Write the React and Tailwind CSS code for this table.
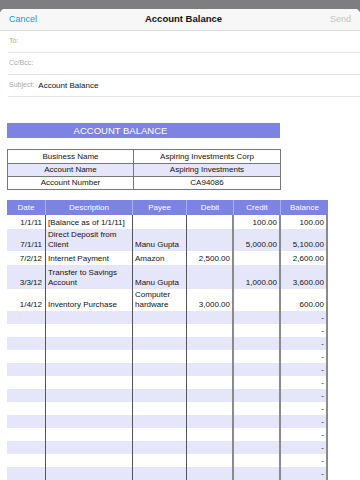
import React from "react";

const rows = [
  { bg: "bg-white", h: "h-[14px]", date: "1/1/11", desc: "[Balance as of 1/1/11]", payee: "", debit: "", credit: "100.00", balance: "100.00" },
  { bg: "bg-[#e6e6fa]", h: "h-[22px]", date: "7/1/11", desc: "Direct Deposit from Client", payee: "Manu Gupta", debit: "", credit: "5,000.00", balance: "5,100.00" },
  { bg: "bg-white", h: "h-[14px]", date: "7/2/12", desc: "Internet Payment", payee: "Amazon", debit: "2,500.00", credit: "", balance: "2,600.00" },
  { bg: "bg-[#e6e6fa]", h: "h-[24px]", date: "3/3/12", desc: "Transfer to Savings Account", payee: "Manu Gupta", debit: "", credit: "1,000.00", balance: "3,600.00" },
  { bg: "bg-white", h: "h-[22px]", date: "1/4/12", desc: "Inventory Purchase", payee: "Computer hardware", debit: "3,000.00", credit: "", balance: "600.00" },
];

const emptyRows = Array.from({ length: 13 }, (_, i) => i);

const gridCols = "grid grid-cols-[39px_87px_54px_47px_47px_47px]";

const Row = ({ row }) => (
  <div className={`${gridCols} ${row.bg} ${row.h}`}>
    <div className="flex items-end justify-end pr-[3px] pb-[1px] border-r border-[#555]">{row.date}</div>
    <div className="flex items-end pl-[2px] pb-[1px] border-r border-[#555]">{row.desc}</div>
    <div className="flex items-end pl-[2px] pb-[1px] border-r border-[#555]">{row.payee}</div>
    <div className="flex items-end justify-end pr-[2px] pb-[1px] border-r-2 border-[#8a8a8a]">{row.debit}</div>
    <div className="flex items-end justify-end pr-[2px] pb-[1px] border-r-2 border-[#8a8a8a]">{row.credit}</div>
    <div className="flex items-end justify-end pr-[2px] pb-[1px] border-r-2 border-[#8a8a8a]">{row.balance}</div>
  </div>
);

export default function App() {
  return (
    <div className="w-[360px] h-[480px] overflow-hidden bg-[#7e7e81] font-['Liberation_Sans',Arial,sans-serif]">
      <div className="h-[9px]" />
      <div className="bg-white rounded-t-[5px] h-full">
        <div className="h-[22px] bg-[#f7f7f7] border-b border-[#dcdcdc] rounded-t-[5px] flex items-center justify-between px-[9px] text-[9px]">
          <span className="text-[#2d8cf0]">Cancel</span>
          <span className="text-[#111] text-[9.5px] font-semibold">Account Balance</span>
          <span className="text-[#c4c4c4]">Send</span>
        </div>
        <div className="ml-[8px] h-[22px] border-b border-[#e3e3e3] flex items-center pl-[1px] text-[7px] text-[#a8a8a8]">To:</div>
        <div className="ml-[8px] h-[22px] border-b border-[#e3e3e3] flex items-center pl-[1px] text-[7px] text-[#a8a8a8]">Cc/Bcc:</div>
        <div className="ml-[8px] h-[22px] border-b border-[#e3e3e3] flex items-center pl-[1px] text-[7px] text-[#a8a8a8]">
          Subject:
          <span className="ml-[4px] text-[8px] text-[#111]">Account Balance</span>
        </div>

        <div className="pl-[7px] pt-[26px] text-[8px] leading-[10px] text-[#111]">
          <div className="w-[273px] h-[15px] bg-[#7c83e2] flex items-center">
            <div className="w-[227px] text-center text-white text-[9.5px]">ACCOUNT BALANCE</div>
          </div>

          <div className="mt-[11px] w-[274px] border border-[#777]">
            <div className="grid grid-cols-[126px_1fr] h-[13px] items-center">
              <div className="text-center border-r border-[#777] h-full flex items-center justify-center">Business Name</div>
              <div className="text-center">Aspiring Investments Corp</div>
            </div>
            <div className="grid grid-cols-[126px_1fr] h-[13px] items-center bg-[#e6e6fa] border-t border-[#777]">
              <div className="text-center border-r border-[#777] h-full flex items-center justify-center">Account Name</div>
              <div className="text-center">Aspiring Investments</div>
            </div>
            <div className="grid grid-cols-[126px_1fr] h-[13px] items-center border-t border-[#777]">
              <div className="text-center border-r border-[#777] h-full flex items-center justify-center">Account Number</div>
              <div className="text-center">CA94086</div>
            </div>
          </div>

          <div className="mt-[10px] w-[321px]">
            <div className={`${gridCols} h-[15px] bg-[#7c83e2] text-white`}>
              <div className="flex items-center justify-center border-r border-[#aab0ee]">Date</div>
              <div className="flex items-center justify-center border-r border-[#aab0ee]">Description</div>
              <div className="flex items-center justify-center border-r border-[#aab0ee]">Payee</div>
              <div className="flex items-center justify-center border-r border-[#aab0ee]">Debit</div>
              <div className="flex items-center justify-center border-r border-[#aab0ee]">Credit</div>
              <div className="flex items-center justify-center">Balance</div>
            </div>
            {rows.map((row) => (
              <Row key={row.date} row={row} />
            ))}
            {emptyRows.map((i) => (
              <Row
                key={i}
                row={{
                  bg: i % 2 === 0 ? "bg-[#e6e6fa]" : "bg-white",
                  h: "h-[13px]",
                  date: "",
                  desc: "",
                  payee: "",
                  debit: "",
                  credit: "",
                  balance: "-",
                }}
              />
            ))}
          </div>
        </div>
      </div>
    </div>
  );
}
